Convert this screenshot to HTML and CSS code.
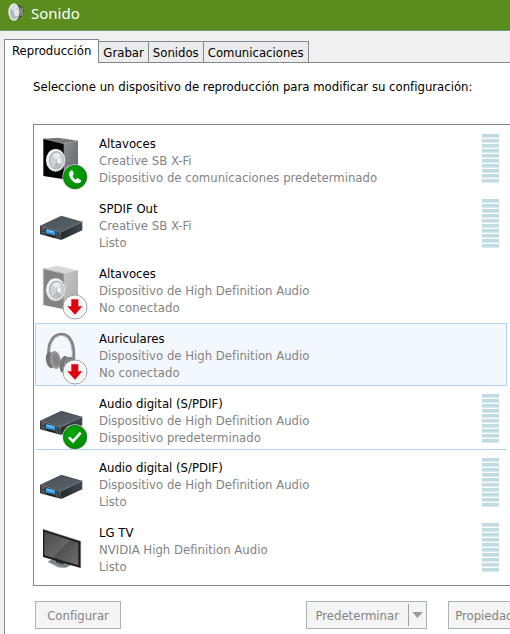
FILE: index.html
```html
<!DOCTYPE html>
<html lang="es">
<head>
  <meta charset="utf-8">
  <title>Sonido</title>
  <link rel="stylesheet" href="styles.css">
</head>
<body>
  <!-- shared icon shapes -->
  <svg class="defs" width="0" height="0" aria-hidden="true">
    <defs>
      <linearGradient id="boxSide" x1="0" y1="0" x2="1" y2="1">
        <stop offset="0" stop-color="#8d8e93"/>
        <stop offset="1" stop-color="#62636a"/>
      </linearGradient>
      <linearGradient id="boxSideOff" x1="0" y1="0" x2="1" y2="1">
        <stop offset="0" stop-color="#c6c6c6"/>
        <stop offset="1" stop-color="#a9a9a9"/>
      </linearGradient>
      <linearGradient id="rim" x1="0" y1="0" x2="1" y2="1">
        <stop offset="0" stop-color="#ffffff"/>
        <stop offset="1" stop-color="#d0d4d6"/>
      </linearGradient>
      <linearGradient id="deckTop" x1="0" y1="0" x2="1" y2="1">
        <stop offset="0" stop-color="#454c53"/>
        <stop offset="1" stop-color="#5f676f"/>
      </linearGradient>
      <linearGradient id="deckSide" x1="0" y1="0" x2="1" y2="0">
        <stop offset="0" stop-color="#22282d"/>
        <stop offset="1" stop-color="#414950"/>
      </linearGradient>
      <linearGradient id="screen" x1="0" y1="0" x2="1" y2="1">
        <stop offset="0" stop-color="#4a4a4a"/>
        <stop offset="0.5" stop-color="#666666"/>
        <stop offset="0.51" stop-color="#515151"/>
        <stop offset="1" stop-color="#6f6f6f"/>
      </linearGradient>
      <radialGradient id="green" cx="0.4" cy="0.35" r="0.7">
        <stop offset="0" stop-color="#0ba80b"/>
        <stop offset="1" stop-color="#008a00"/>
      </radialGradient>
    </defs>
    <symbol id="cone" viewBox="0 0 60 70">
      <ellipse cx="29" cy="35" rx="29" ry="34" fill="url(#rim)"/>
      <ellipse cx="31" cy="35" rx="22" ry="27" fill="#9ea4a9"/>
      <ellipse cx="32" cy="36" rx="20" ry="25" fill="#ccd2d6"/>
      <path d="M34 37L20 20Q32 6 44 20Z" fill="#e9edf0"/>
      <path d="M34 37L47 53Q34 66 22 54Z" fill="#b4bbc0"/>
      <ellipse cx="38" cy="37" rx="8" ry="10" fill="#a3a9ae"/>
      <ellipse cx="39" cy="36" rx="7" ry="9" fill="#eef1f3"/>
    </symbol>
    <symbol id="speaker" viewBox="27 45 147 165">
      <path d="M40 56L84 53L144 62L102 71Z" fill="#77787d"/>
      <path d="M102 71L144 62V153L102 178Z" fill="url(#boxSide)"/>
      <path d="M40 56L102 71V178L40 168Z" fill="#050505"/>
      <path d="M40 56L102 71V178" fill="none" stroke="#85868b" stroke-width="2"/>
      <use href="#cone" x="48" y="86" width="60" height="70"/>
    </symbol>
    <symbol id="speaker-off" viewBox="27 45 147 165">
      <path d="M40 56L84 47L144 62L102 71Z" fill="#d6d6d6"/>
      <path d="M102 71L144 61V153L102 178Z" fill="url(#boxSideOff)"/>
      <path d="M40 56L102 71V178L40 165Z" fill="#838383"/>
      <path d="M40 165V56L102 71V178" fill="none" stroke="#b9b9b9" stroke-width="3"/>
      <use href="#cone" x="48" y="84" width="60" height="70"/>
    </symbol>
    <symbol id="deck" viewBox="27 45 147 165">
      <path d="M30 122L94 92L157 110L92 142Z" fill="url(#deckTop)"/>
      <path d="M92 142L157 110V136L94 165Z" fill="url(#deckSide)"/>
      <path d="M30 122L92 142L94 165L30 148Z" fill="#3a4147"/>
      <path d="M30 122L92 142L157 110" fill="none" stroke="#6c747b" stroke-width="2"/>
      <path d="M48 132L75 139V150L48 144Z" fill="#35a4f5"/>
      <path d="M52 136L70 141" stroke="#8fd0ff" stroke-width="3"/>
      <path d="M50 150L76 157" stroke="#111518" stroke-width="3"/>
      <circle cx="40" cy="131" r="3.5" fill="#d0473f"/>
      <circle cx="40" cy="143" r="2" fill="#8a9095"/>
      <ellipse cx="83" cy="150" rx="4" ry="5" fill="#1b2024" stroke="#8a9095" stroke-width="1.5"/>
    </symbol>
    <symbol id="headphones" viewBox="27 45 147 165">
      <path d="M57 122C52 88 68 58 94 58C122 58 136 88 130 142" fill="none" stroke="#858585" stroke-width="9"/>
      <path d="M60 118C56 90 70 62 94 61C118 62 128 88 127 130" fill="none" stroke="#b0b0b0" stroke-width="3"/>
      <ellipse cx="61" cy="135" rx="13" ry="25" fill="#747474" transform="rotate(-10 61 135)"/>
      <ellipse cx="76" cy="135" rx="16" ry="27" fill="#969696" transform="rotate(-8 76 135)"/>
      <ellipse cx="78" cy="134" rx="9" ry="19" fill="#858585" transform="rotate(-8 78 134)"/>
      <ellipse cx="104" cy="149" rx="15" ry="26" fill="#6c6c6c" transform="rotate(8 104 149)"/>
      <ellipse cx="119" cy="152" rx="18" ry="27" fill="#858585" transform="rotate(8 119 152)"/>
      <path d="M99 126Q91 149 101 172M108 126Q100 150 108 174" fill="none" stroke="#a3a3a3" stroke-width="2"/>
    </symbol>
    <symbol id="tv" viewBox="27 45 147 165">
      <path d="M54 158L68 149L124 168L107 176L84 174Z" fill="#7d8388"/>
      <path d="M54 158L84 174L107 176" fill="none" stroke="#a7acb0" stroke-width="3"/>
      <path d="M78 150L100 158V167L78 160Z" fill="#33373a"/>
      <path d="M39 61L152 97V177L39 144Z" fill="#1c1c1c"/>
      <path d="M43 68L145 101V169L43 139Z" fill="url(#screen)"/>
      <path d="M39 61L152 97V177" fill="none" stroke="#77777a" stroke-width="1.5"/>
    </symbol>
    <symbol id="phone" viewBox="0 0 78 78">
      <circle cx="39" cy="39" r="38" fill="#cfd8cf"/>
      <circle cx="39" cy="39" r="35" fill="url(#green)" stroke="#08700a" stroke-width="2"/>
      <path d="M27 20Q19 24 22 35Q27 51 42 57Q53 60 58 52Q58 49 48 43Q45 42 41 47Q33 42 31 35Q36 32 35 29Q33 20 30 19Z" fill="#fff"/>
    </symbol>
    <symbol id="check" viewBox="0 0 78 78">
      <circle cx="39" cy="39" r="38" fill="#cfd8cf"/>
      <circle cx="39" cy="39" r="35" fill="url(#green)" stroke="#08700a" stroke-width="2"/>
      <path d="M21 40L33 52L56 26" fill="none" stroke="#fff" stroke-width="8"/>
    </symbol>
    <symbol id="down" viewBox="0 0 78 78">
      <circle cx="39" cy="39" r="36" fill="#fff" stroke="#a0a0a0" stroke-width="3"/>
      <circle cx="39" cy="39" r="30" fill="#f4f4f4"/>
      <path d="M28 16H49V37H61L39 62L16 37H28Z" fill="#e00010"/>
    </symbol>
  </svg>

  <header class="titlebar">
    <svg class="titlebar-icon" viewBox="0 0 48 54" aria-hidden="true">
      <path d="M22 2L44 12Q50 26 42 40L24 52Z" fill="#3d3f40"/>
      <path d="M36 12L45 15V36L36 41Z" fill="#858789"/>
      <ellipse cx="18" cy="27" rx="17" ry="26" fill="#e8eaeb"/>
      <ellipse cx="19" cy="28" rx="13" ry="21" fill="#b2b8bb"/>
      <path d="M20 28L8 15Q18 3 28 13Z" fill="#d9dddf"/>
      <ellipse cx="25" cy="29" rx="6" ry="10" fill="#e6e8e9"/>
    </svg>
    <h1 class="title">Sonido</h1>
  </header>

  <main class="dialog">
    <div class="tabs" role="tablist">
      <button class="tab active" role="tab" aria-selected="true">Reproducción</button>
      <button class="tab" role="tab">Grabar</button>
      <button class="tab" role="tab">Sonidos</button>
      <button class="tab" role="tab">Comunicaciones</button>
    </div>

    <section class="panel">
      <p class="hint">Seleccione un dispositivo de reproducción para modificar su configuración:</p>

      <ul class="devices">
        <li class="device">
          <div class="device-icon">
            <svg class="picture"><use href="#speaker"/></svg>
            <svg class="badge"><use href="#phone"/></svg>
          </div>
          <div class="device-text">
            <h2 class="device-name">Altavoces</h2>
            <p>Creative SB X-Fi</p>
            <p>Dispositivo de comunicaciones predeterminado</p>
          </div>
          <div class="meter"></div>
        </li>
        <li class="device">
          <div class="device-icon">
            <svg class="picture"><use href="#deck"/></svg>
          </div>
          <div class="device-text">
            <h2 class="device-name">SPDIF Out</h2>
            <p>Creative SB X-Fi</p>
            <p>Listo</p>
          </div>
          <div class="meter"></div>
        </li>
        <li class="device">
          <div class="device-icon">
            <svg class="picture"><use href="#speaker-off"/></svg>
            <svg class="badge"><use href="#down"/></svg>
          </div>
          <div class="device-text">
            <h2 class="device-name">Altavoces</h2>
            <p>Dispositivo de High Definition Audio</p>
            <p>No conectado</p>
          </div>
        </li>
        <li class="device selected">
          <div class="device-icon">
            <svg class="picture"><use href="#headphones"/></svg>
            <svg class="badge"><use href="#down"/></svg>
          </div>
          <div class="device-text">
            <h2 class="device-name">Auriculares</h2>
            <p>Dispositivo de High Definition Audio</p>
            <p>No conectado</p>
          </div>
        </li>
        <li class="device underlined">
          <div class="device-icon">
            <svg class="picture"><use href="#deck"/></svg>
            <svg class="badge"><use href="#check"/></svg>
          </div>
          <div class="device-text">
            <h2 class="device-name">Audio digital (S/PDIF)</h2>
            <p>Dispositivo de High Definition Audio</p>
            <p>Dispositivo predeterminado</p>
          </div>
          <div class="meter"></div>
        </li>
        <li class="device">
          <div class="device-icon">
            <svg class="picture"><use href="#deck"/></svg>
          </div>
          <div class="device-text">
            <h2 class="device-name">Audio digital (S/PDIF)</h2>
            <p>Dispositivo de High Definition Audio</p>
            <p>Listo</p>
          </div>
          <div class="meter"></div>
        </li>
        <li class="device">
          <div class="device-icon">
            <svg class="picture"><use href="#tv"/></svg>
          </div>
          <div class="device-text">
            <h2 class="device-name">LG TV</h2>
            <p>NVIDIA High Definition Audio</p>
            <p>Listo</p>
          </div>
          <div class="meter"></div>
        </li>
      </ul>

      <div class="actions">
        <button class="button" disabled>Configurar</button>
        <div class="actions-right">
          <div class="split">
            <button class="button split-main" disabled>Predeterminar</button>
            <button class="button split-arrow" disabled aria-label="Más opciones">
              <svg class="arrow" viewBox="0 0 12 7"><path d="M0 0H12L6 7Z" fill="#9a9a9a"/></svg>
            </button>
          </div>
          <button class="button" disabled>Propiedades</button>
        </div>
      </div>
    </section>
  </main>
</body>
</html>
```
FILE: styles.css
```css
:root {
  --accent: #5a8c1e;
  --window: #f0f0f0;
  --border: #828790;
  --button-border: #adb2b5;
  --muted: #838383;
  --highlight: #b0d0f5;
}

* {
  box-sizing: border-box;
}

body {
  margin: 0;
  min-height: 100vh;
  display: flex;
  flex-direction: column;
  overflow: hidden;
  background: var(--window);
  color: #000;
  font-family: "DejaVu Sans Condensed", "Noto Sans", sans-serif;
  font-size: 13px;
  line-height: 17px;
}

h1,
h2,
p,
ul {
  margin: 0;
  padding: 0;
  font-weight: 400;
}

.defs {
  position: absolute;
}

.titlebar {
  display: flex;
  gap: 7px;
  height: 31px;
  padding: 3px 8px;
  background: var(--accent);
  border-bottom: 1px solid #6f9b78;
}

.titlebar-icon {
  width: 16px;
  height: 18px;
}

.title {
  color: #fff;
  font-family: "Noto Sans", sans-serif;
  font-size: 15px;
  line-height: 20px;
}

.dialog {
  flex: 1;
  display: flex;
  flex-direction: column;
  padding: 8px 0 0 4px;
}

.tabs {
  display: flex;
  align-items: flex-end;
}

.tab {
  height: 21px;
  margin: 0 0 0 -1px;
  padding: 0 4px;
  border: 1px solid var(--border);
  border-bottom: 0;
  background: #ececec;
  color: #000;
  font: inherit;
}

.tab.active {
  position: relative;
  height: 24px;
  margin: 0 0 -1px;
  padding: 0 7px 2px;
  background: #fff;
}

.panel {
  flex: 1;
  padding: 15px 0 0 28px;
  border: 1px solid var(--border);
  border-width: 1px 0 0 1px;
  background: #fff;
}

.devices {
  margin-top: 29px;
  padding: 3px 3px 3px 1px;
  border: 1px solid var(--border);
  border-right: 0;
  list-style: none;
}

.device {
  display: flex;
  gap: 11px;
  height: 65px;
  padding: 6px 7px 0 3px;
  border: 1px solid transparent;
}

.device.selected {
  height: 63px;
  margin-bottom: 2px;
  border-color: var(--highlight);
  background: #f3f8fe;
}

.device.underlined {
  height: 62px;
  margin-bottom: 2px;
  border-bottom-color: var(--highlight);
}

.device-icon {
  position: relative;
  width: 49px;
  height: 55px;
}

.picture {
  width: 49px;
  height: 55px;
}

.badge {
  position: absolute;
  right: 0;
  bottom: 0;
  width: 26px;
  height: 26px;
}

.device-text {
  flex: 1;
  color: var(--muted);
}

.device-name {
  color: #000;
  font-size: 13px;
}

.meter {
  width: 17px;
  height: 49px;
  margin-top: -1px;
  background: repeating-linear-gradient(#c0dce2 0 3px, #d9eaee 3px 4px, #fff 4px 5px);
}

.actions {
  display: flex;
  justify-content: space-between;
  margin: 15px -24px 0 2px;
}

.actions-right {
  display: flex;
  gap: 21px;
}

.button {
  min-width: 86px;
  height: 28px;
  padding: 0 5px;
  border: 1px solid var(--button-border);
  background: #f4f4f4;
  color: var(--muted);
  font: inherit;
}

.split {
  display: flex;
  align-items: center;
  border: 1px solid var(--button-border);
  background: #f4f4f4;
}

.split .button {
  height: 26px;
  border: 0;
}

.split-main {
  padding: 0 9px 0 8px;
}

.split .split-arrow {
  min-width: 18px;
  height: 22px;
  padding: 0 3px;
  border-left: 1px solid #a0a0a0;
}

.arrow {
  display: block;
  width: 11px;
  height: 6px;
}
```
